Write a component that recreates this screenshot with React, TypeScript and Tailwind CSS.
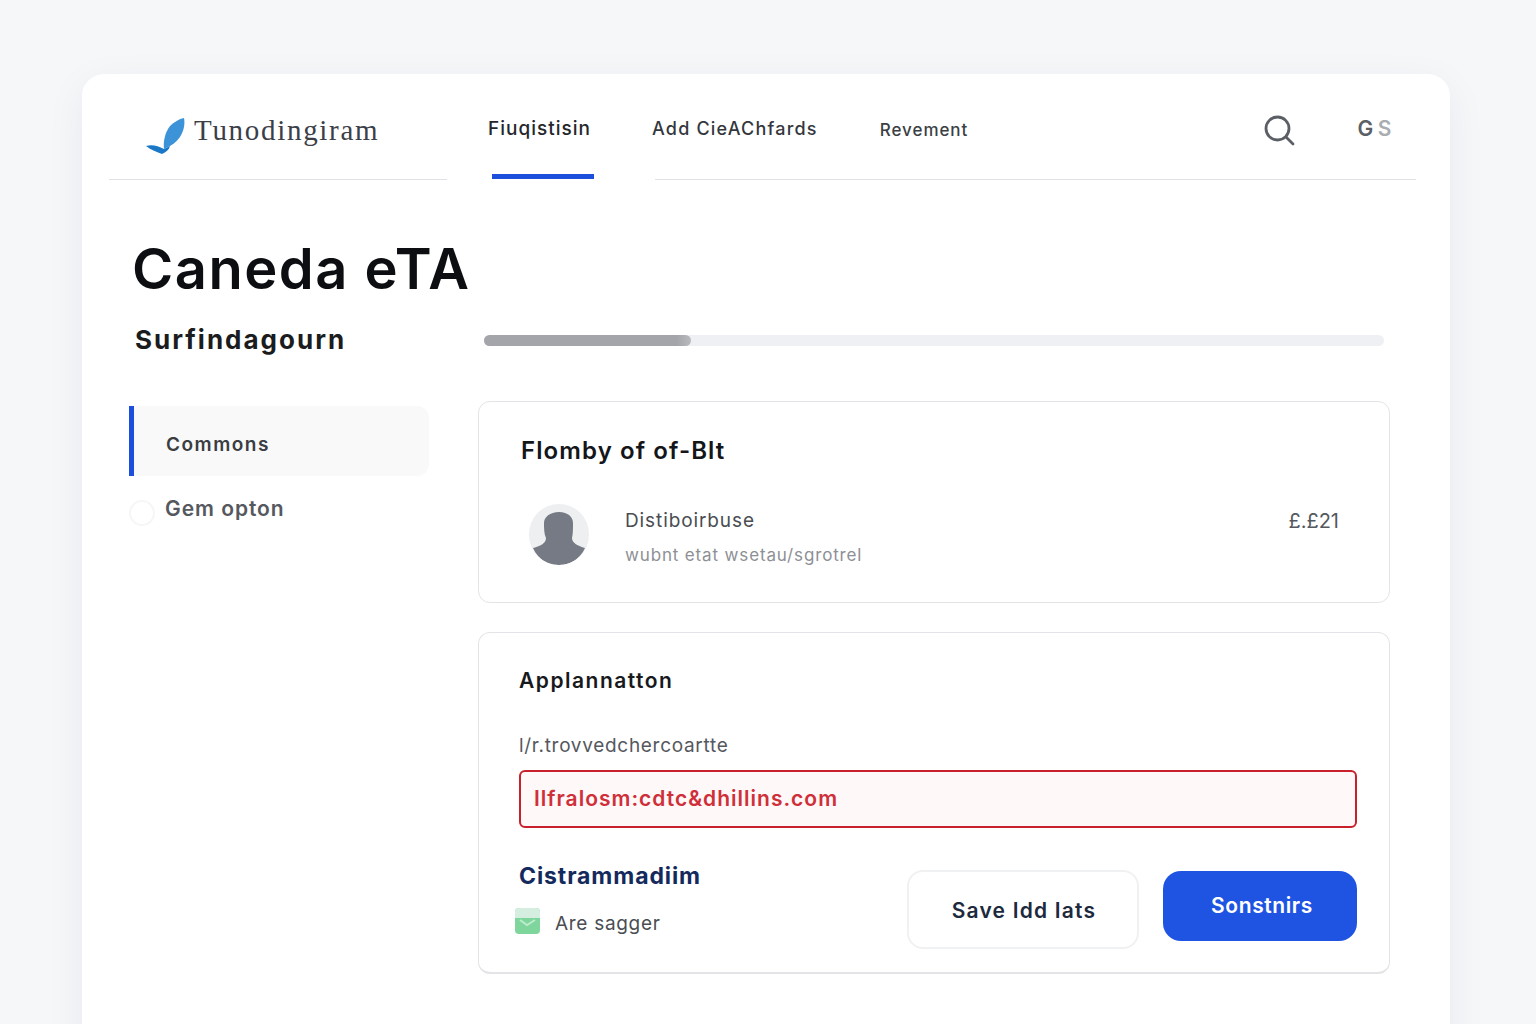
export default function App() {
  return (
    <div className="h-[1024px] overflow-hidden bg-[#f6f7f9] pt-[74px] pr-[86px] pl-[82px] font-['Inter',sans-serif]">
      <div className="h-[1000px] rounded-[22px] bg-white pr-[34px] pl-[27px] shadow-[0_10px_40px_rgba(30,40,70,0.06)]">
        <header className="flex h-[106px] items-stretch border-b border-[#dfe1e4]">
          <div className="flex w-[338px] items-start pl-[37px]">
            <svg width="40" height="38" viewBox="0 0 40 38" className="mt-[42px] shrink-0">
              <path d="M38 2C40 12 35 24 24 30C22 31 20 32 18 33C17 26 19 16 24 10C28 6 33 3 38 2Z" fill="#3d93d8" />
              <path d="M0 30C6 28 12 30 18 33L24 30C23 34 20 36 16 38C11 36 5 34 0 30Z" fill="#1a78c7" />
            </svg>
            <span className="mt-[43px] ml-[8px] font-['Liberation_Serif',serif] text-[29px] leading-[27px] tracking-[1.7px] whitespace-nowrap text-[#3b4048]">
              Tunodingiram
            </span>
          </div>
          <nav className="mb-[-1px] flex items-stretch border-b border-white pr-[61px] pl-[45px]">
            <div className="flex w-[102px] flex-col items-start">
              <span className="mt-[44px] ml-[-4px] text-[19px] leading-[22px] font-medium tracking-[1px] whitespace-nowrap text-[#24272c]">
                Fiuqistisin
              </span>
              <span className="mt-auto h-[5px] w-full bg-[#1c4fdc]" />
            </div>
          </nav>
          <div className="flex flex-1 items-start">
            <span className="mt-[44px] ml-[-3px] text-[18px] leading-[22px] font-medium tracking-[1.2px] whitespace-nowrap text-[#33373d]">
              Add CieAChfards
            </span>
            <span className="mt-[45px] ml-[62px] text-[17px] leading-[22px] font-medium tracking-[0.95px] whitespace-nowrap text-[#3b3f45]">
              Revement
            </span>
            <svg width="32" height="32" viewBox="0 0 32 32" fill="none" className="mt-[40px] ml-auto">
              <circle cx="14.5" cy="14.5" r="11.5" stroke="#5b5f65" strokeWidth="2.8" />
              <path d="M23 23L30 30" stroke="#5b5f65" strokeWidth="2.8" strokeLinecap="round" />
            </svg>
            <span className="mt-[44px] mr-[20px] ml-[63px] text-[21px] leading-[22px] font-semibold tracking-[4.5px] text-[#5b5f65]">
              G<span className="text-[#a9acb0]">S</span>
            </span>
          </div>
        </header>

        <main className="pl-[20px]">
          <div className="pt-[54px] pl-[3px]">
            <h1 className="text-[56px] leading-[70px] font-semibold tracking-[1.5px] text-[#0c0e12]">Caneda eTA</h1>
          </div>
          <div className="mt-[24px] flex h-[24px] items-center">
            <div className="w-[355px] pl-[6px] text-[26px] leading-[24px] font-bold tracking-[2px] whitespace-nowrap text-[#1a1c20]">
              Surfindagourn
            </div>
            <div className="h-[11px] w-[900px] rounded-full bg-[#eff0f3]">
              <div className="h-full w-[207px] rounded-full bg-[linear-gradient(90deg,#a3a5aa_93%,#b8babd_100%)]" />
            </div>
          </div>

          <div className="mt-[49px] flex">
            <aside className="w-[349px] shrink-0 pt-[5px]">
              <div className="flex h-[70px] w-[300px] items-center rounded-r-[12px] border-l-[5px] border-[#1c4fdc] bg-[#f9f9fa] pt-[8px] pl-[32px]">
                <span className="text-[19px] font-semibold tracking-[1.5px] text-[#3a3d42]">Commons</span>
              </div>
              <div className="mt-[17px] flex items-start">
                <span className="mt-[7px] h-[26px] w-[26px] rounded-full border-2 border-[#f6f6f7]" />
                <span className="ml-[10px] text-[21px] font-semibold tracking-[0.95px] text-[#55585e]">Gem opton</span>
              </div>
            </aside>

            <section className="w-[912px] shrink-0">
              <div className="h-[202px] rounded-[12px] border border-[#e2e4e7] px-[42px] pt-[33px]">
                <h2 className="text-[24px] leading-[32px] font-semibold tracking-[1.1px] text-[#14161a]">Flomby of of-Blt</h2>
                <div className="mt-[37px] flex items-start pl-[8px]">
                  <div className="h-[61px] w-[60px] shrink-0 overflow-hidden rounded-full bg-[#eeeff1]">
                    <svg width="60" height="61" viewBox="0 0 60 61">
                      <path d="M4 44C12 42 17 39 17 34C15 30 15 24 15 19C15 13 21 8 30 8C39 8 44 13 44 19C44 24 44 30 43 34C43 39 49 42 56 44C51 55 41 61 30 61C18 61 9 55 4 44Z" fill="#767a84" />
                    </svg>
                  </div>
                  <div className="mt-[5px] ml-[36px] flex-1">
                    <div className="flex items-center justify-between pr-[8px]">
                      <span className="text-[19px] leading-[24px] tracking-[0.9px] text-[#4a4d52]">Distiboirbuse</span>
                      <span className="text-[20px] leading-[24px] text-[#55585e]">£.£21</span>
                    </div>
                    <div className="mt-[10px] text-[17px] leading-[24px] tracking-[0.85px] text-[#8d9095]">wubnt etat wsetau/sgrotrel</div>
                  </div>
                </div>
              </div>

              <div className="mt-[29px] h-[342px] rounded-[12px] border border-b-2 border-[#e2e4e7] pt-[33px] pr-[32px] pl-[40px]">
                <h2 className="text-[21px] leading-[30px] font-semibold tracking-[1.5px] text-[#17191d]">Applannatton</h2>
                <div className="mt-[38px] text-[19px] leading-[24px] tracking-[0.7px] text-[#55585e]">l/r.trovvedchercoartte</div>
                <div className="mt-[12px] flex h-[58px] items-center rounded-[6px] border-2 border-[#c8202c] bg-[#fff8f8] px-[13px] text-[21px] font-semibold tracking-[1px] text-[#cf2f38]">
                  Ilfralosm:cdtc&amp;dhillins.com
                </div>
                <div className="mt-[43px] flex items-start">
                  <div className="flex-1">
                    <div className="mt-[-10px] text-[23px] leading-[30px] font-bold tracking-[0.9px] text-[#14295c]">Cistrammadiim</div>
                    <div className="mt-[17px] ml-[-4px] flex items-start">
                      <svg width="25" height="26" viewBox="0 0 25 26" className="shrink-0">
                        <rect width="25" height="26" rx="4" fill="#7fd69c" />
                        <path d="M0 4a4 4 0 0 1 4-4h17a4 4 0 0 1 4 4v6H0Z" fill="#d6eee0" />
                        <path d="M5 12l7 5 8-5" stroke="#bdeccd" strokeWidth="2" fill="none" />
                      </svg>
                      <span className="mt-[2px] ml-[15px] text-[19px] tracking-[0.7px] text-[#4a4d52]">Are sagger</span>
                    </div>
                  </div>
                  <button className="mt-[-1px] h-[79px] w-[232px] rounded-[16px] border-2 border-[#f0f1f3] bg-white pt-[2px] pl-[2px] text-[21px] font-semibold tracking-[1.2px] text-[#1d2a3d]">
                    Save Idd Iats
                  </button>
                  <button className="ml-[24px] h-[70px] w-[194px] rounded-[18px] bg-[#1f54e3] pl-[4px] text-[21px] font-semibold tracking-[0.6px] text-white">
                    Sonstnirs
                  </button>
                </div>
              </div>
            </section>
          </div>
        </main>
      </div>
    </div>
  );
}
